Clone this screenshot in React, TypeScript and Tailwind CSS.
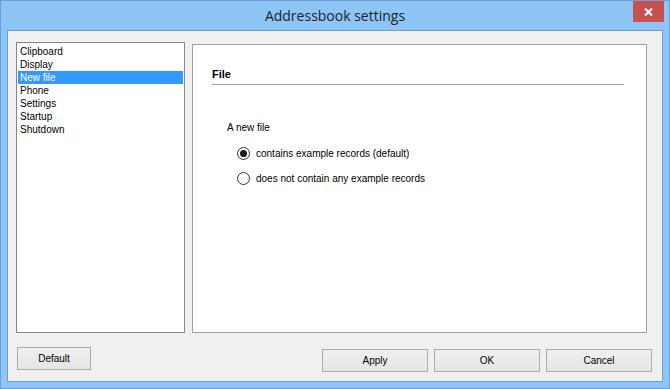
import React from "react";

const items = ["Clipboard", "Display", "New file", "Phone", "Settings", "Startup", "Shutdown"];

function Radio({ checked, label }: { checked: boolean; label: string }) {
  return (
    <div className="flex items-center h-[13px]">
      <div className="w-[13px] h-[13px] rounded-full border border-[#333] bg-white flex items-center justify-center">
        {checked && <div className="w-[7px] h-[7px] rounded-full bg-[#1a1a1a]" />}
      </div>
      <span className="ml-[6px] leading-[13px]">{label}</span>
    </div>
  );
}

function Button({ label, w }: { label: string; w: string }) {
  return (
    <div
      className={`${w} h-[23px] border border-[#acacac] bg-gradient-to-b from-[#f0f0f0] to-[#e5e5e5] flex items-center justify-center text-[10px] text-black`}
    >
      {label}
    </div>
  );
}

export default function App() {
  return (
    <div
      className="w-[670px] h-[389px] bg-[#8cc5f6] border border-[#6a9fd6] flex flex-col relative"
      style={{ fontFamily: '"Liberation Sans", Arial, sans-serif' }}
    >
      {/* Title bar */}
      <div className="h-[29px] flex items-center justify-center">
        <span className="text-[14px] text-[#1e1e1e]" style={{ fontFamily: '"Open Sans", "Noto Sans", sans-serif' }}>
          Addressbook settings
        </span>
      </div>
      <div className="absolute top-0 right-[5px] w-[31px] h-[21px] bg-[#c75050] flex items-center justify-center">
        <svg width="9" height="8" viewBox="0 0 9 8">
          <path d="M1 0.5 L8 7.5 M8 0.5 L1 7.5" stroke="white" strokeWidth="2" />
        </svg>
      </div>

      {/* Client area */}
      <div className="mx-[6px] h-[352px] border border-[#6a9fd6] bg-[#f0f0f0] flex flex-col text-[10px] text-black">
        <div className="flex items-start pl-[8px] pt-[11px]">
          {/* List box */}
          <div className="w-[169px] h-[291px] border border-[#828790] bg-white pt-[2px] px-[1px]">
            {items.map((it) => (
              <div
                key={it}
                className={`h-[13px] leading-[13px] pl-[2px] ${it === "New file" ? "bg-[#3399ff] text-white" : ""}`}
              >
                {it}
              </div>
            ))}
          </div>

          {/* Panel */}
          <div className="ml-[7px] mt-[2px] w-[455px] h-[289px] border border-[#a0a0a0] bg-white pl-[19px] pt-[23px]">
            <div className="w-[412px] border-b border-[#a0a0a0] pb-[3px]">
              <span className="text-[11px] font-bold leading-[13px] block">File</span>
            </div>
            <div className="pl-[15px] pt-[36px] leading-[13px]">A new file</div>
            <div className="pl-[25px] pt-[13px] flex flex-col gap-[12px]">
              <Radio checked label="contains example records (default)" />
              <Radio checked={false} label="does not contain any example records" />
            </div>
          </div>
        </div>

        {/* Buttons */}
        <div className="flex items-start pl-[9px] pr-[10px] mt-[14px]">
          <Button label="Default" w="w-[74px]" />
          <div className="ml-auto mt-[2px] flex gap-[6px]">
            <Button label="Apply" w="w-[106px]" />
            <Button label="OK" w="w-[106px]" />
            <Button label="Cancel" w="w-[106px]" />
          </div>
        </div>
      </div>
    </div>
  );
}
